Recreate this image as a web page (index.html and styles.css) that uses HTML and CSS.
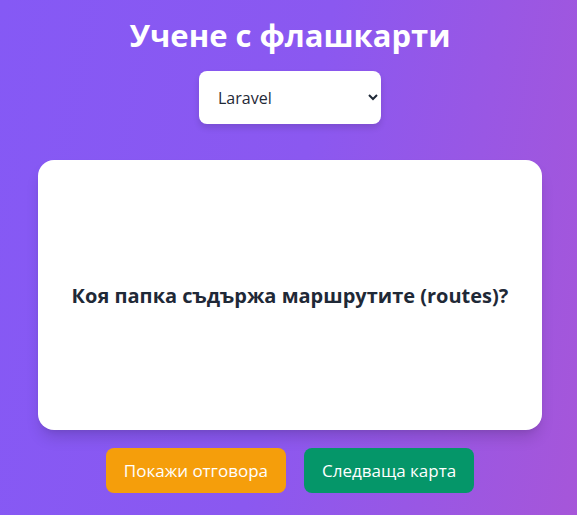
FILE: index.html
```html
<!DOCTYPE html>
<html lang="bg">
<head>
<meta charset="utf-8">
<link rel="stylesheet" href="styles.css">
</head>
<body>
<main class="app">
  <h1 class="title">Учене с флашкарти</h1>
  <div class="select-wrap">
    <select class="deck">
      <option>Laravel</option>
    </select>
  </div>
  <section class="card">
    <p class="question">Коя папка съдържа маршрутите (routes)?</p>
  </section>
  <div class="actions">
    <button class="btn btn-show">Покажи отговора</button>
    <button class="btn btn-next">Следваща карта</button>
  </div>
</main>
</body>
</html>
```
FILE: styles.css
```css
html, body {
  margin: 0;
  padding: 0;
  height: 100%;
}
body {
  background: linear-gradient(100deg, #8559f5 0%, #8b58f0 50%, #a656d9 100%);
  font-family: "Open Sans", "Noto Sans", sans-serif;
  color: #1f2937;
}
.app {
  display: flex;
  flex-direction: column;
  align-items: center;
  padding-top: 13px;
  padding-left: 3px;
}
.title {
  margin: 0;
  color: #fff;
  font-size: 31px;
  font-weight: 700;
  line-height: 44px;
}
.select-wrap {
  margin-top: 14px;
}
.deck {
  width: 182px;
  height: 53px;
  border: none;
  border-radius: 8px;
  background: #fff;
  padding: 0 8px 0 15px;
  font-family: inherit;
  font-size: 16px;
  color: #1f2937;
  box-shadow: 0 4px 6px rgba(0,0,0,0.12);
}
.card {
  margin-top: 36px;
  width: 504px;
  height: 270px;
  background: #fff;
  border-radius: 16px;
  box-shadow: 0 10px 15px -3px rgba(0,0,0,0.15), 0 4px 6px -4px rgba(0,0,0,0.1);
  display: flex;
  align-items: center;
  justify-content: center;
  box-sizing: border-box;
  padding: 16px;
}
.question {
  margin: 0;
  font-size: 20px;
  font-weight: 700;
  color: #1f2937;
  text-align: center;
}
.actions {
  margin-top: 18px;
  display: flex;
  gap: 18px;
}
.btn {
  height: 45px;
  border: none;
  border-radius: 8px;
  color: #fff;
  font-family: inherit;
  font-size: 17px;
  padding: 0 18px;
  cursor: pointer;
}
.btn-show {
  background: #f59e0b;
}
.btn-next {
  background: #059669;
}
```
